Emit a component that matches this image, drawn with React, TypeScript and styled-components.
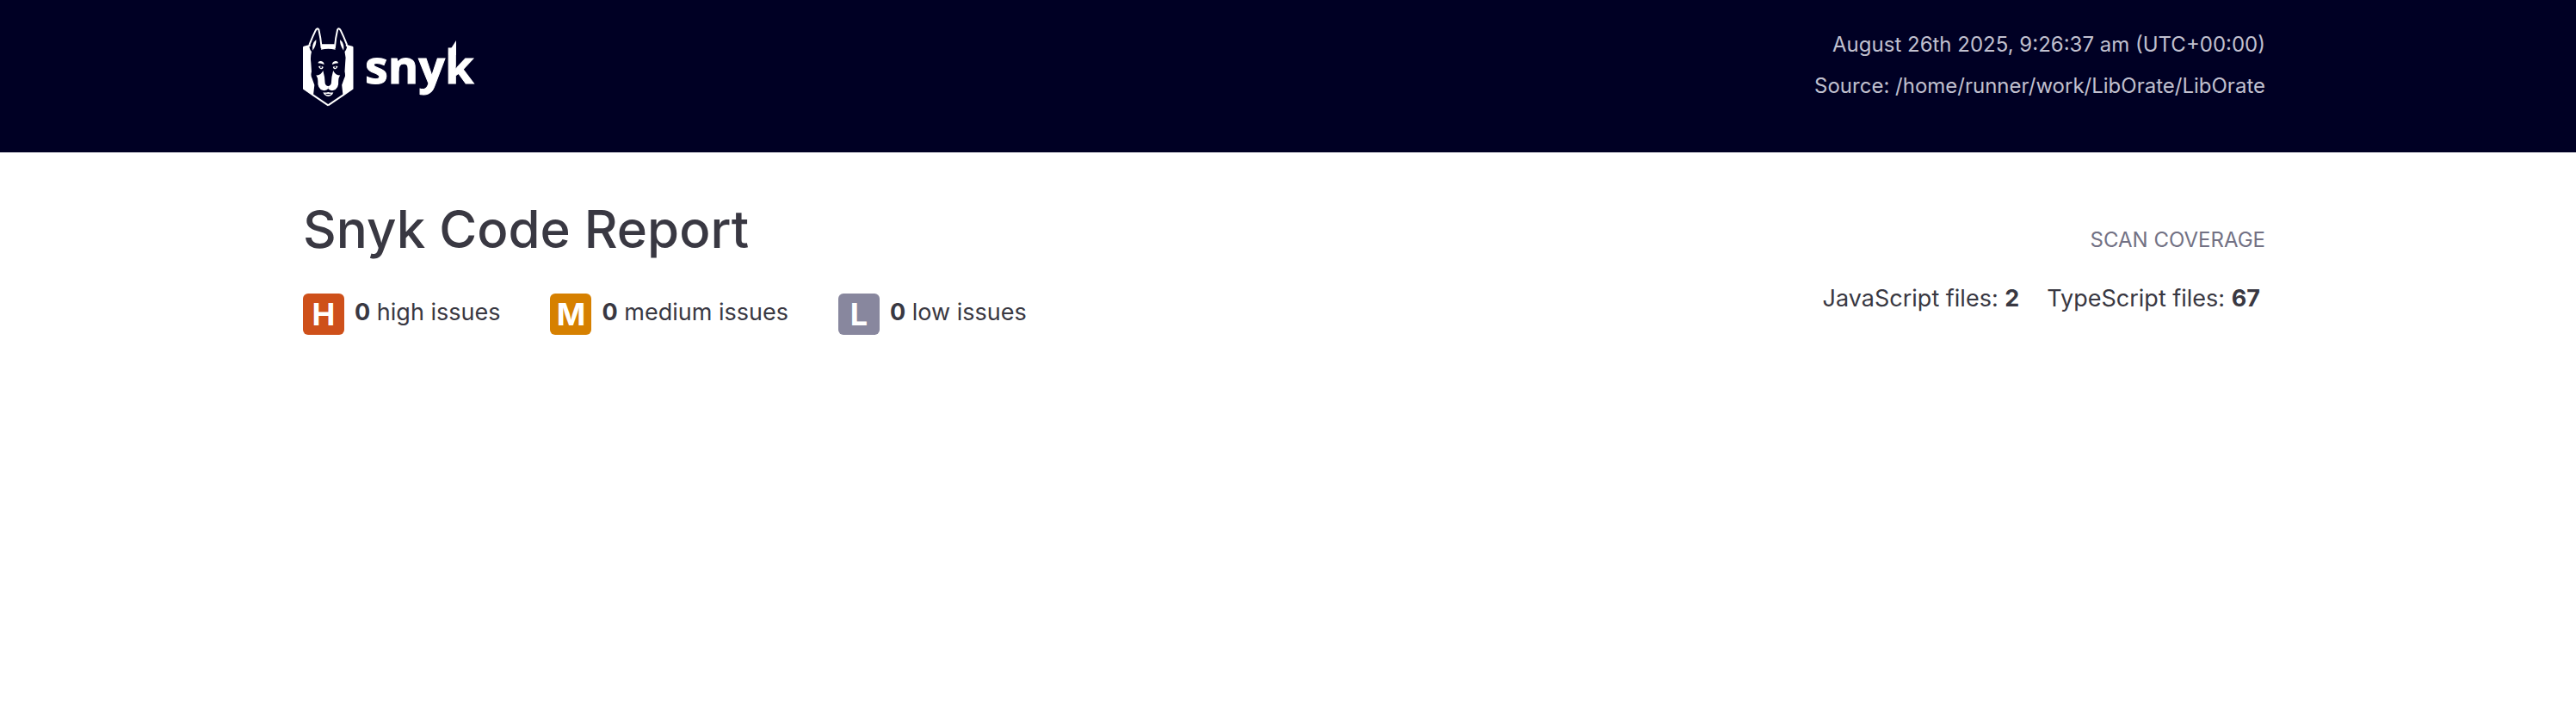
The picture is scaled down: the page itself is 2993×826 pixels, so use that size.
import React from "react";
import styled, { createGlobalStyle } from "styled-components";

const GlobalStyle = createGlobalStyle`
  *, *::before, *::after { box-sizing: border-box; }
  body {
    margin: 0;
    background: #fff;
    color: #393842;
    font-family: Inter, "Liberation Sans", sans-serif;
    font-size: 27px;
    line-height: 40px;
  }
`;

const Band = styled.header`
  background: #000024;
  color: #c1c0cf;
  padding: 28px 9px 49px 0;
`;

const Content = styled.main`
  padding-right: 9px;
`;

const Container = styled.div<{ $top?: number }>`
  display: flex;
  justify-content: space-between;
  align-items: flex-start;
  max-width: 2280px;
  margin: 0 auto;
  padding-top: ${({ $top = 0 }) => $top}px;
`;

const Logo = styled.svg`
  display: block;
  width: 210px;
  height: 100px;
`;

const Wordmark = styled.text`
  font-family: "Open Sans", "Noto Sans", sans-serif;
  font-size: 54px;
  font-weight: 700;
  fill: #fff;
  stroke: #fff;
  stroke-width: 1px;
`;

const MetaList = styled.ul`
  list-style: none;
  margin: 0;
  padding: 0;
  text-align: right;
  font-size: 24px;
  line-height: 48px;
`;

const Title = styled.h1`
  margin: 0 0 36px;
  font-size: 60px;
  line-height: 78px;
  font-weight: 500;
`;

const Severities = styled.ul`
  display: flex;
  gap: 58px;
  list-style: none;
  margin: 0;
  padding: 0;
`;

const Severity = styled.li`
  display: flex;
  gap: 12px;
  line-height: 44px;
`;

const Badge = styled.span<{ $color: string }>`
  width: 48px;
  height: 48px;
  border-radius: 6px;
  background: ${({ $color }) => $color};
  color: #fff;
  font-size: 36px;
  line-height: 48px;
  font-weight: 700;
  text-align: center;
`;

const Coverage = styled.section`
  padding-top: 32px;
  text-align: right;
`;

const CoverageTitle = styled.h2`
  margin: 0 0 28px;
  color: #727184;
  font-size: 24px;
  line-height: 40px;
  font-weight: 400;
  text-transform: uppercase;
`;

const Files = styled.ul`
  display: flex;
  justify-content: flex-end;
  gap: 32px;
  list-style: none;
  margin: 0;
  padding: 0 6px 0 0;
`;

const severities = [
  { letter: "H", label: "high issues", count: 0, color: "#ce501a" },
  { letter: "M", label: "medium issues", count: 0, color: "#d68000" },
  { letter: "L", label: "low issues", count: 0, color: "#88879e" },
];

const files = [
  { label: "JavaScript files:", count: 2 },
  { label: "TypeScript files:", count: 67 },
];

/* Left half of the dog's head; the right half is its mirror image. */
function HeadHalf() {
  return (
    <>
      <path fill="#fff" d="M36 104Q36 102 39 101L58 96Q58 112 66 120Q61 140 64 158L66 190Q62 204 68 214L76 236L72 272L36 250Z" />
      <path fill="none" stroke="#fff" strokeWidth="6" strokeLinejoin="round" d="M59 102V94Q70 66 80 46Q85 36 91 43Q98 72 101 108" />
      <path fill="#fff" d="M70 116Q66 92 82 78Q84 96 70 116Z" />
      <path fill="none" stroke="#fff" strokeWidth="6" strokeLinejoin="round" d="M38 248L72 272L124 307" />
      <path fill="#fff" d="M88 160Q91 151 99 153Q109 155 110 165Q100 160 88 160Z" />
      <path fill="#fff" d="M90 171Q99 169 107 173Q106 181 98 181Q92 179 90 171Z" />
      <circle cx="99" cy="174" r="3" fill="#000024" />
      <path fill="#fff" d="M106 186L111 208L113 230Q115 239 124 240V249Q118 257 106 255Q96 253 91 243Q87 236 88 222Q88 212 82 202Q98 204 106 186Z" />
    </>
  );
}

function SnykLogo() {
  return (
    <Logo viewBox="0 0 210 100" role="img" aria-label="Snyk">
      <g transform="translate(-12 -8) scale(0.33333)">
        <HeadHalf />
        <g transform="translate(247.5 0) scale(-1 1)">
          <HeadHalf />
        </g>
        <path fill="#fff" d="M102 94H146L149 113Q124 107 99 113Z" />
        <path fill="#fff" d="M106 262Q115 264 124 261Q133 264 142 262Q138 275 124 276Q111 275 106 262Z" />
        <path fill="#000024" d="M113 266Q124 268 135 266Q131 271 124 271Q117 271 113 266Z" />
      </g>
      <Wordmark x="72" y="69">snyk</Wordmark>
      <path fill="#fff" d="M169 36V33L178 19V36Z" />
    </Logo>
  );
}

export default function App() {
  return (
    <>
      <GlobalStyle />
      <Band>
        <Container>
          <SnykLogo />
          <MetaList>
            <li>August 26th 2025, 9:26:37 am (UTC+00:00)</li>
            <li>Source: /home/runner/work/LibOrate/LibOrate</li>
          </MetaList>
        </Container>
      </Band>
      <Content>
        <Container $top={50}>
          <div>
            <Title>Snyk Code Report</Title>
            <Severities>
              {severities.map((s) => (
                <Severity key={s.letter}>
                  <Badge $color={s.color}>{s.letter}</Badge>
                  <span>
                    <strong>{s.count}</strong> {s.label}
                  </span>
                </Severity>
              ))}
            </Severities>
          </div>
          <Coverage>
            <CoverageTitle>Scan coverage</CoverageTitle>
            <Files>
              {files.map((f) => (
                <li key={f.label}>
                  {f.label} <strong>{f.count}</strong>
                </li>
              ))}
            </Files>
          </Coverage>
        </Container>
      </Content>
    </>
  );
}
